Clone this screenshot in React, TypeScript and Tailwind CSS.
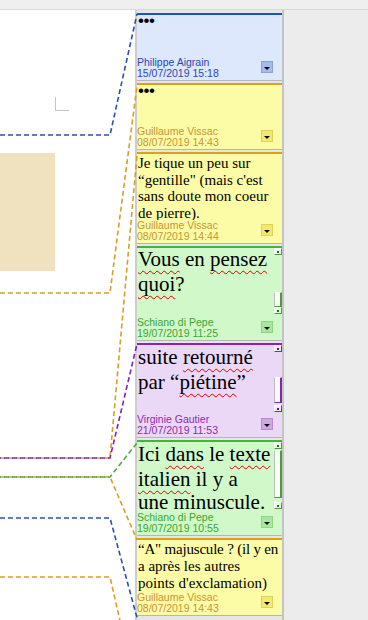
import React from "react";

type Tone = {
    bg: string;
    line: string;
    text: string;
    btn: string;
    knob: string;
    thumb: string;
    dot: string;
};

const tones: Record<string, Tone> = {
    blue: {
        bg: "bg-[#dde8fc]",
        line: "border-t-[#2150c4]",
        text: "text-[#2b47b4]",
        btn: "bg-[#a4bbea] border-[#8aa2d9]",
        knob: "",
        thumb: "",
        dot: "",
    },
    yellow: {
        bg: "bg-[#fcfca6]",
        line: "border-t-[#d9a21b]",
        text: "text-[#c99532]",
        btn: "bg-[#f3e872] border-[#e2d05c]",
        knob: "",
        thumb: "",
        dot: "",
    },
    green: {
        bg: "bg-[#d0f8c9]",
        line: "border-t-[#48b23c]",
        text: "text-[#3ca630]",
        btn: "bg-[#a9e6a0] border-[#8ed585]",
        knob: "bg-[#e6fde1] border-r-[#4a9a3e] border-b-[#4a9a3e]",
        thumb: "bg-[#f7fff5] border-r-[#4a9a3e] border-b-[#4a9a3e]",
        dot: "bg-[#2f6a28]",
    },
    purple: {
        bg: "bg-[#ebd7f6]",
        line: "border-t-[#8d20b8]",
        text: "text-[#8b2db1]",
        btn: "bg-[#d0a8e2] border-[#b98cd1]",
        knob: "bg-[#f5eafb] border-r-[#7d2aa3] border-b-[#7d2aa3]",
        thumb: "bg-[#fbf6fe] border-r-[#7d2aa3] border-b-[#7d2aa3]",
        dot: "bg-[#5a1a78]",
    },
};

const wavy = "underline decoration-wavy decoration-[#e00000] decoration-1 underline-offset-[4px]";

function Knob({ tone, className = "" }: { tone: Tone; className?: string }) {
    return (
        <div className={`w-[8px] h-[7px] border border-t-white border-l-white flex items-center justify-center ${tone.knob} ${className}`}>
            <div className={`w-[2px] h-[2px] ${tone.dot}`} />
        </div>
    );
}

function Scroll({ tone, thumb, down }: { tone: Tone; thumb: string; down: string }) {
    return (
        <div className="w-[8px] shrink-0 flex flex-col">
            <Knob tone={tone} />
            <div className={`w-[8px] border-l border-l-[#bdbdbd] border-t border-t-white border-r-2 border-b ${tone.thumb} ${thumb}`} />
            <Knob tone={tone} className={down} />
        </div>
    );
}

function Note({
    tone,
    h,
    author,
    date,
    children,
    scroll,
}: {
    tone: Tone;
    h: string;
    author: string;
    date: string;
    children?: React.ReactNode;
    scroll?: React.ReactNode;
}) {
    return (
        <div className={`${h} ${tone.bg} border-t-2 ${tone.line} border-b border-b-[#b6b6b6] flex flex-col shrink-0`}>
            <div className="flex-1 flex min-h-0 overflow-hidden">
                <div className="flex-1 min-w-0 overflow-hidden pl-[1px]">{children}</div>
                {scroll}
            </div>
            <div className="h-[23px] flex items-end shrink-0">
                <div className={`flex-1 font-['Liberation_Sans'] text-[10.5px] leading-[11px] pb-[1px] whitespace-nowrap ${tone.text}`}>
                    <div>{author}</div>
                    <div>{date}</div>
                </div>
                <div className={`w-[12px] h-[12px] border mr-[9px] mb-[7px] flex items-center justify-center ${tone.btn}`}>
                    <div className="mt-[2px] w-0 h-0 border-l-[3px] border-r-[3px] border-t-[3px] border-l-transparent border-r-transparent border-t-black" />
                </div>
            </div>
        </div>
    );
}

function Dots() {
    return <div className="font-['Liberation_Sans'] text-[17px] leading-[12px] tracking-[-0.5px] text-black">•••</div>;
}

export default function App() {
    return (
        <div className="w-[368px] h-[620px] overflow-hidden relative bg-[#ececec] font-['Liberation_Sans',sans-serif]">
            <div className="h-[10px] bg-[#efefef] border-b border-[#d9d9d9]" />
            <div className="flex h-[610px]">
                {/* page */}
                <div className="w-[135px] bg-white flex flex-col">
                    <div className="mt-[87px] ml-[55px] w-[14px] h-[14px] border-l border-b border-[#c4c4c4]" />
                    <div className="mt-[42px] w-[55px] h-[118px] bg-[#f0e1bf]" />
                </div>

                {/* comments */}
                <div className="w-[149px] bg-[#e6e6e6] border-l-2 border-l-[#cdcdcd] border-r-2 border-r-[#c4c4c4] pt-[3px] flex flex-col gap-[2px] overflow-hidden">
                    <Note tone={tones.blue} h="h-[68px]" author="Philippe Aigrain" date="15/07/2019 15:18">
                        <Dots />
                    </Note>
                    <Note tone={tones.yellow} h="h-[67px]" author="Guillaume Vissac" date="08/07/2019 14:43">
                        <Dots />
                    </Note>
                    <Note tone={tones.yellow} h="h-[92px]" author="Guillaume Vissac" date="08/07/2019 14:44">
                        <div className="font-['Liberation_Serif',serif] text-[15px] leading-[16.5px] pt-[1px] text-black whitespace-nowrap">
                            <div>Je tique un peu sur</div>
                            <div>“gentille" (mais c'est</div>
                            <div>sans doute mon coeur</div>
                            <div>de pierre).</div>
                        </div>
                    </Note>
                    <Note
                        tone={tones.green}
                        h="h-[95px]"
                        author="Schiano di Pepe"
                        date="19/07/2019 11:25"
                        scroll={<Scroll tone={tones.green} thumb="mt-[37px] h-[15px]" down="" />}
                    >
                        <div className="font-['Liberation_Serif',serif] text-[21px] text-black whitespace-nowrap">
                            <div className="leading-[22px]">
                                <span className={wavy}>Vous</span> en <span className={wavy}>pensez</span>
                            </div>
                            <div className="leading-[28px]">
                                <span className={wavy}>quoi</span>?
                            </div>
                        </div>
                    </Note>
                    <Note
                        tone={tones.purple}
                        h="h-[95px]"
                        author="Virginie Gautier"
                        date="21/07/2019 11:53"
                        scroll={<Scroll tone={tones.purple} thumb="mt-[25px] h-[26px]" down="mt-[2px]" />}
                    >
                        <div className="font-['Liberation_Serif',serif] text-[21px] leading-[25px] text-black whitespace-nowrap">
                            <div>
                                suite <span className={wavy}>retourné</span>
                            </div>
                            <div>
                                par “<span className={wavy}>piétine</span>”
                            </div>
                        </div>
                    </Note>
                    <Note
                        tone={tones.green}
                        h="h-[96px]"
                        author="Schiano di Pepe"
                        date="19/07/2019 10:55"
                        scroll={<Scroll tone={tones.green} thumb="mt-[1px] h-[48px]" down="mt-[4px]" />}
                    >
                        <div className="font-['Liberation_Serif',serif] text-[21px] leading-[24.5px] text-black whitespace-nowrap">
                            <div>
                                Ici <span className={wavy}>dans</span> le <span className={wavy}>texte</span>
                            </div>
                            <div>
                                <span className={wavy}>italien</span> il y a
                            </div>
                            <div className="leading-[22px]">une minuscule.</div>
                        </div>
                    </Note>
                    <Note tone={tones.yellow} h="h-[78px]" author="Guillaume Vissac" date="08/07/2019 14:43">
                        <div className="font-['Liberation_Serif',serif] text-[15px] leading-[17px] pt-[1px] text-black whitespace-nowrap">
                            <div className="tracking-[-0.2px]">“A" majuscule ? (il y en</div>
                            <div>a après les autres</div>
                            <div>points d'exclamation)</div>
                        </div>
                    </Note>
                </div>

                <div className="flex-1" />
            </div>

            {/* anchor lines */}
            <svg className="absolute top-0 left-0 pointer-events-none" width="142" height="620" viewBox="0 0 142 620">
                <g fill="none" strokeWidth="1.6" strokeDasharray="5 3">
                    <polyline points="0,135 110,135 137,14" stroke="#2d4db8" />
                    <polyline points="0,293 110,293 137,86" stroke="#d6a122" />
                    <polyline points="0,458 110,458 137,155" stroke="#d6a122" />
                    <polyline points="0,458 110,458 137,344" stroke="#8a1fb3" strokeDashoffset="4" />
                    <polyline points="0,477 110,477 137,540" stroke="#d6a122" />
                    <polyline points="0,477 110,477 137,443" stroke="#4cad36" strokeDashoffset="4" />
                    <polyline points="0,518 110,518 139,625" stroke="#2d4db8" />
                    <polyline points="0,577 110,577 121,625" stroke="#d6a122" />
                </g>
            </svg>
        </div>
    );
}
